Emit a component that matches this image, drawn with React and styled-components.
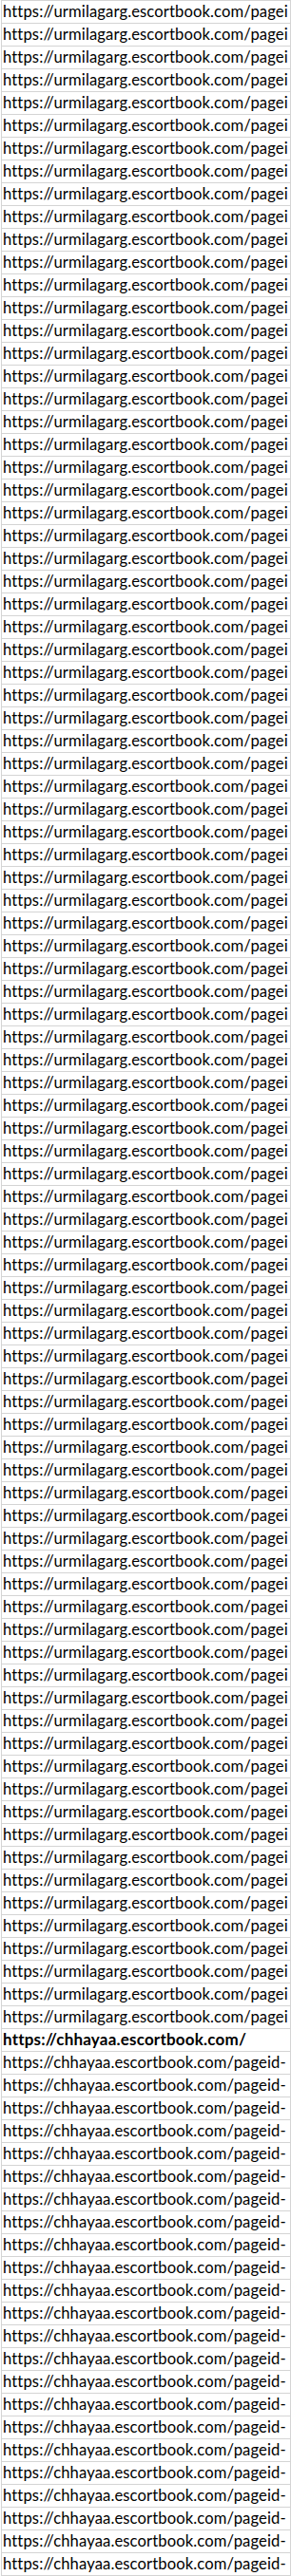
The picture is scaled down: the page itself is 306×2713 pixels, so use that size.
import React from "react";
import styled, { createGlobalStyle } from "styled-components";

const GlobalStyle = createGlobalStyle`
  html, body {
    margin: 0;
    padding: 0;
    background: #ffffff;
  }
  body {
    font-family: Lato, "Open Sans", "Noto Sans", sans-serif;
  }
`;

const Sheet = styled.div`
  width: 306px;
  box-sizing: border-box;
  padding-left: 1px;
  background: #ffffff;
`;

const Column = styled.div`
  display: flex;
  flex-direction: column;
  border-left: 1px solid #d4d4d4;
  border-right: 1px solid #d4d4d4;
  border-bottom: 1px solid #d4d4d4;
`;

const Cell = styled.div`
  box-sizing: border-box;
  height: 24px;
  border-top: 1px solid #d4d4d4;
  padding: 0 0 0 1px;
  line-height: 22px;
  font-size: ${(p) => (p.$bold ? "17px" : "16.6px")};
  font-weight: ${(p) => (p.$bold ? 700 : 400)};
  letter-spacing: ${(p) => (p.$bold ? "0.2px" : "0.12px")};
  color: #000000;
  white-space: nowrap;
  overflow: hidden;
`;

const rows = [];
for (let i = 0; i < 89; i++) {
  rows.push({ text: "https://urmilagarg.escortbook.com/pagei", bold: false });
}
rows.push({ text: "https://chhayaa.escortbook.com/", bold: true });
for (let i = 0; i < 23; i++) {
  rows.push({ text: "https://chhayaa.escortbook.com/pageid-", bold: false });
}

export default function App() {
  return (
    <>
      <GlobalStyle />
      <Sheet>
        <Column>
          {rows.map((r, i) => (
            <Cell key={i} $bold={r.bold}>
              {r.text}
            </Cell>
          ))}
        </Column>
      </Sheet>
    </>
  );
}
